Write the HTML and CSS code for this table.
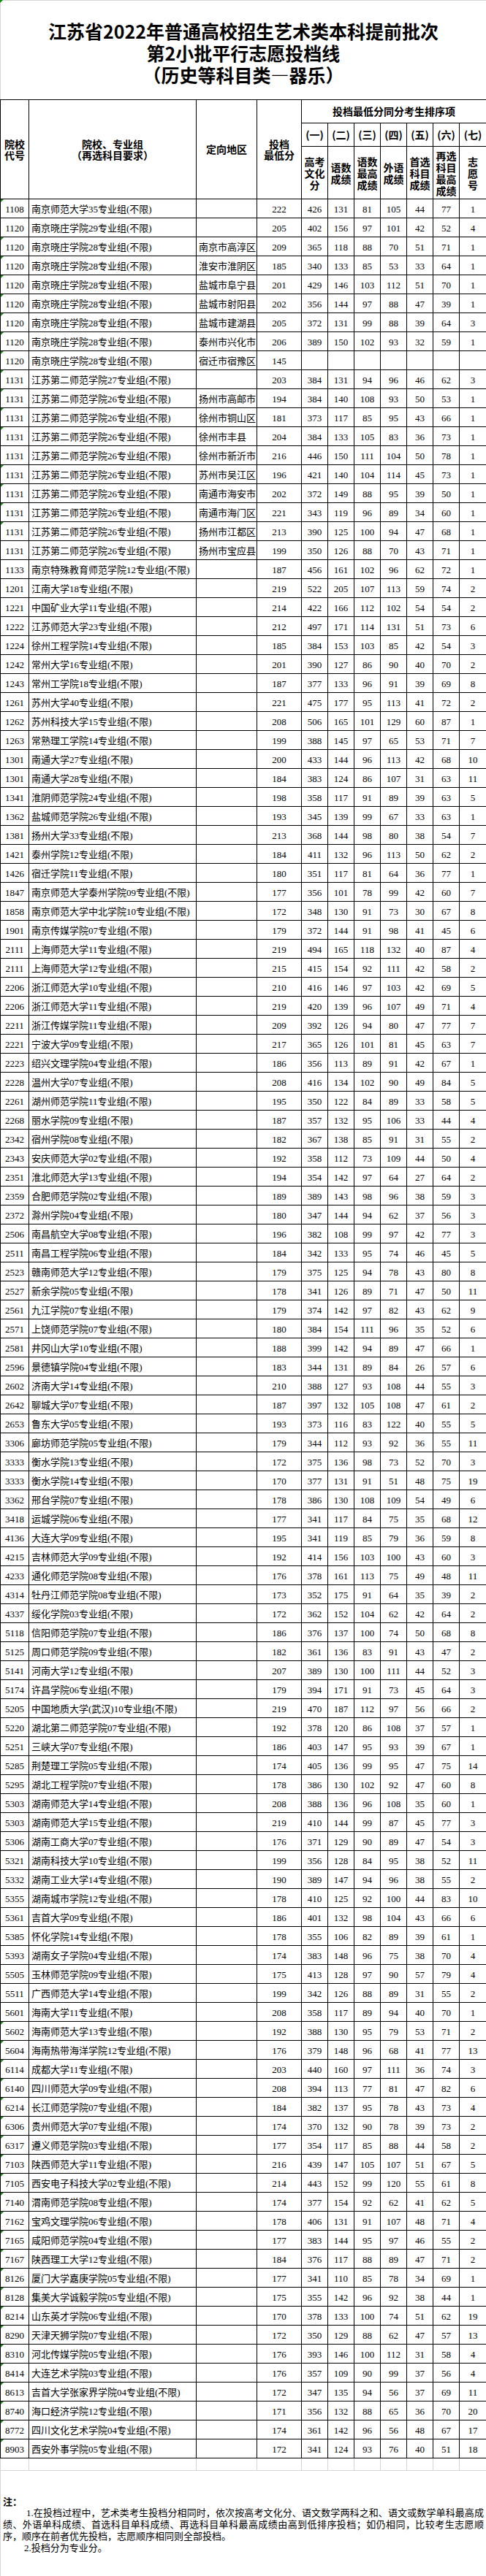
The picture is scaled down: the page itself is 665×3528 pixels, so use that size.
FILE: index.html
```
<!DOCTYPE html>
<html lang="zh-CN">
<head>
<meta charset="utf-8">
<title>江苏省2022年普通高校招生艺术类本科提前批次第2小批平行志愿投档线</title>
<link rel="stylesheet" href="styles.css">
</head>
<body>
<div class="sheet">
  <div class="title">
    <div>江苏省2022年普通高校招生艺术类本科提前批次</div>
    <div>第2小批平行志愿投档线</div>
    <div>（历史等科目类—器乐）</div>
  </div>
  <table class="grid">
    <colgroup>
      <col class="c-code"><col class="c-name"><col class="c-area"><col class="c-score">
      <col class="c-n"><col class="c-n"><col class="c-n"><col class="c-n"><col class="c-n"><col class="c-n"><col class="c-last">
    </colgroup>
    <thead>
      <tr class="hd1">
        <th rowspan="3" class="h2l">院校<br>代号</th>
        <th rowspan="3" class="h2l">院校、专业组<br>（再选科目要求）</th>
        <th rowspan="3">定向地区</th>
        <th rowspan="3" class="h2l">投档<br>最低分</th>
        <th colspan="7">投档最低分同分考生排序项</th>
      </tr>
      <tr class="hd2">
        <th>(一)</th><th>(二)</th><th>(三)</th><th>(四)</th><th>(五)</th><th>(六)</th><th>(七)</th>
      </tr>
      <tr class="hd3">
        <th class="sub">高考<br>文化<br>分</th>
        <th class="sub">语数<br>成绩</th>
        <th class="sub">语数<br>最高<br>成绩</th>
        <th class="sub">外语<br>成绩</th>
        <th class="sub">首选<br>科目<br>成绩</th>
        <th class="sub">再选<br>科目<br>最高<br>成绩</th>
        <th class="sub">志<br>愿<br>号</th>
      </tr>
    </thead>
    <tbody>
<tr class="m"><td>1108</td><td class="n">南京师范大学35专业组(不限)</td><td class="a"></td><td>222</td><td>426</td><td>131</td><td>81</td><td>105</td><td>44</td><td>77</td><td>1</td></tr>
<tr><td>1120</td><td class="n">南京晓庄学院29专业组(不限)</td><td class="a"></td><td>205</td><td>402</td><td>156</td><td>97</td><td>101</td><td>42</td><td>52</td><td>4</td></tr>
<tr class="m"><td>1120</td><td class="n">南京晓庄学院28专业组(不限)</td><td class="a">南京市高淳区</td><td>209</td><td>365</td><td>118</td><td>88</td><td>70</td><td>51</td><td>71</td><td>1</td></tr>
<tr class="m"><td>1120</td><td class="n">南京晓庄学院28专业组(不限)</td><td class="a">淮安市淮阴区</td><td>185</td><td>340</td><td>133</td><td>85</td><td>53</td><td>33</td><td>64</td><td>1</td></tr>
<tr class="m"><td>1120</td><td class="n">南京晓庄学院28专业组(不限)</td><td class="a">盐城市阜宁县</td><td>201</td><td>429</td><td>146</td><td>103</td><td>112</td><td>51</td><td>70</td><td>1</td></tr>
<tr class="m"><td>1120</td><td class="n">南京晓庄学院28专业组(不限)</td><td class="a">盐城市射阳县</td><td>202</td><td>356</td><td>144</td><td>97</td><td>88</td><td>47</td><td>39</td><td>1</td></tr>
<tr class="m"><td>1120</td><td class="n">南京晓庄学院28专业组(不限)</td><td class="a">盐城市建湖县</td><td>205</td><td>372</td><td>131</td><td>99</td><td>88</td><td>39</td><td>64</td><td>3</td></tr>
<tr class="m"><td>1120</td><td class="n">南京晓庄学院28专业组(不限)</td><td class="a">泰州市兴化市</td><td>206</td><td>389</td><td>150</td><td>102</td><td>93</td><td>32</td><td>59</td><td>1</td></tr>
<tr class="m"><td>1120</td><td class="n">南京晓庄学院28专业组(不限)</td><td class="a">宿迁市宿豫区</td><td>145</td><td></td><td></td><td></td><td></td><td></td><td></td><td></td></tr>
<tr class="m"><td>1131</td><td class="n">江苏第二师范学院27专业组(不限)</td><td class="a"></td><td>203</td><td>384</td><td>131</td><td>94</td><td>96</td><td>46</td><td>62</td><td>3</td></tr>
<tr class="m"><td>1131</td><td class="n">江苏第二师范学院26专业组(不限)</td><td class="a">扬州市高邮市</td><td>194</td><td>384</td><td>140</td><td>108</td><td>93</td><td>50</td><td>53</td><td>1</td></tr>
<tr class="m"><td>1131</td><td class="n">江苏第二师范学院26专业组(不限)</td><td class="a">徐州市铜山区</td><td>181</td><td>373</td><td>117</td><td>85</td><td>95</td><td>43</td><td>66</td><td>1</td></tr>
<tr class="m"><td>1131</td><td class="n">江苏第二师范学院26专业组(不限)</td><td class="a">徐州市丰县</td><td>204</td><td>384</td><td>133</td><td>105</td><td>83</td><td>36</td><td>73</td><td>1</td></tr>
<tr><td>1131</td><td class="n">江苏第二师范学院26专业组(不限)</td><td class="a">徐州市新沂市</td><td>216</td><td>446</td><td>150</td><td>111</td><td>104</td><td>50</td><td>78</td><td>1</td></tr>
<tr class="m"><td>1131</td><td class="n">江苏第二师范学院26专业组(不限)</td><td class="a">苏州市吴江区</td><td>196</td><td>421</td><td>140</td><td>104</td><td>114</td><td>45</td><td>73</td><td>1</td></tr>
<tr class="m"><td>1131</td><td class="n">江苏第二师范学院26专业组(不限)</td><td class="a">南通市海安市</td><td>202</td><td>372</td><td>149</td><td>88</td><td>95</td><td>39</td><td>50</td><td>1</td></tr>
<tr class="m"><td>1131</td><td class="n">江苏第二师范学院26专业组(不限)</td><td class="a">南通市海门区</td><td>221</td><td>343</td><td>119</td><td>96</td><td>89</td><td>34</td><td>60</td><td>1</td></tr>
<tr class="m"><td>1131</td><td class="n">江苏第二师范学院26专业组(不限)</td><td class="a">扬州市江都区</td><td>213</td><td>390</td><td>125</td><td>100</td><td>94</td><td>47</td><td>68</td><td>1</td></tr>
<tr><td>1131</td><td class="n">江苏第二师范学院26专业组(不限)</td><td class="a">扬州市宝应县</td><td>199</td><td>350</td><td>126</td><td>88</td><td>70</td><td>43</td><td>71</td><td>1</td></tr>
<tr><td>1133</td><td class="n">南京特殊教育师范学院12专业组(不限)</td><td class="a"></td><td>187</td><td>456</td><td>161</td><td>102</td><td>96</td><td>62</td><td>72</td><td>1</td></tr>
<tr><td>1201</td><td class="n">江南大学18专业组(不限)</td><td class="a"></td><td>219</td><td>522</td><td>205</td><td>107</td><td>113</td><td>59</td><td>74</td><td>2</td></tr>
<tr><td>1221</td><td class="n">中国矿业大学11专业组(不限)</td><td class="a"></td><td>214</td><td>422</td><td>166</td><td>112</td><td>102</td><td>54</td><td>54</td><td>2</td></tr>
<tr><td>1222</td><td class="n">江苏师范大学23专业组(不限)</td><td class="a"></td><td>212</td><td>497</td><td>171</td><td>114</td><td>131</td><td>51</td><td>73</td><td>6</td></tr>
<tr><td>1224</td><td class="n">徐州工程学院14专业组(不限)</td><td class="a"></td><td>185</td><td>384</td><td>153</td><td>103</td><td>85</td><td>42</td><td>54</td><td>3</td></tr>
<tr><td>1242</td><td class="n">常州大学16专业组(不限)</td><td class="a"></td><td>201</td><td>390</td><td>127</td><td>86</td><td>90</td><td>40</td><td>70</td><td>2</td></tr>
<tr><td>1243</td><td class="n">常州工学院18专业组(不限)</td><td class="a"></td><td>187</td><td>377</td><td>133</td><td>96</td><td>91</td><td>39</td><td>69</td><td>8</td></tr>
<tr><td>1261</td><td class="n">苏州大学40专业组(不限)</td><td class="a"></td><td>221</td><td>475</td><td>177</td><td>95</td><td>113</td><td>41</td><td>72</td><td>2</td></tr>
<tr><td>1262</td><td class="n">苏州科技大学15专业组(不限)</td><td class="a"></td><td>208</td><td>506</td><td>165</td><td>101</td><td>129</td><td>60</td><td>87</td><td>1</td></tr>
<tr><td>1263</td><td class="n">常熟理工学院14专业组(不限)</td><td class="a"></td><td>199</td><td>388</td><td>145</td><td>97</td><td>65</td><td>53</td><td>71</td><td>7</td></tr>
<tr><td>1301</td><td class="n">南通大学27专业组(不限)</td><td class="a"></td><td>200</td><td>433</td><td>144</td><td>96</td><td>113</td><td>42</td><td>68</td><td>10</td></tr>
<tr><td>1301</td><td class="n">南通大学28专业组(不限)</td><td class="a"></td><td>184</td><td>383</td><td>124</td><td>86</td><td>107</td><td>31</td><td>63</td><td>11</td></tr>
<tr><td>1341</td><td class="n">淮阴师范学院24专业组(不限)</td><td class="a"></td><td>198</td><td>358</td><td>117</td><td>91</td><td>89</td><td>39</td><td>63</td><td>5</td></tr>
<tr><td>1362</td><td class="n">盐城师范学院26专业组(不限)</td><td class="a"></td><td>193</td><td>345</td><td>139</td><td>99</td><td>67</td><td>33</td><td>63</td><td>1</td></tr>
<tr><td>1381</td><td class="n">扬州大学33专业组(不限)</td><td class="a"></td><td>213</td><td>368</td><td>144</td><td>98</td><td>80</td><td>38</td><td>54</td><td>7</td></tr>
<tr><td>1421</td><td class="n">泰州学院12专业组(不限)</td><td class="a"></td><td>184</td><td>411</td><td>132</td><td>96</td><td>113</td><td>50</td><td>62</td><td>2</td></tr>
<tr><td>1426</td><td class="n">宿迁学院11专业组(不限)</td><td class="a"></td><td>180</td><td>351</td><td>117</td><td>81</td><td>64</td><td>36</td><td>77</td><td>1</td></tr>
<tr><td>1847</td><td class="n">南京师范大学泰州学院09专业组(不限)</td><td class="a"></td><td>177</td><td>356</td><td>101</td><td>78</td><td>99</td><td>42</td><td>60</td><td>7</td></tr>
<tr><td>1858</td><td class="n">南京师范大学中北学院10专业组(不限)</td><td class="a"></td><td>172</td><td>348</td><td>130</td><td>91</td><td>73</td><td>30</td><td>67</td><td>8</td></tr>
<tr><td>1901</td><td class="n">南京传媒学院07专业组(不限)</td><td class="a"></td><td>179</td><td>372</td><td>144</td><td>91</td><td>98</td><td>41</td><td>45</td><td>6</td></tr>
<tr><td>2111</td><td class="n">上海师范大学11专业组(不限)</td><td class="a"></td><td>219</td><td>494</td><td>165</td><td>118</td><td>132</td><td>40</td><td>87</td><td>4</td></tr>
<tr><td>2111</td><td class="n">上海师范大学12专业组(不限)</td><td class="a"></td><td>215</td><td>415</td><td>154</td><td>92</td><td>111</td><td>42</td><td>58</td><td>2</td></tr>
<tr><td>2206</td><td class="n">浙江师范大学10专业组(不限)</td><td class="a"></td><td>210</td><td>416</td><td>146</td><td>97</td><td>103</td><td>42</td><td>69</td><td>5</td></tr>
<tr><td>2206</td><td class="n">浙江师范大学11专业组(不限)</td><td class="a"></td><td>219</td><td>420</td><td>139</td><td>96</td><td>107</td><td>49</td><td>71</td><td>4</td></tr>
<tr><td>2211</td><td class="n">浙江传媒学院11专业组(不限)</td><td class="a"></td><td>209</td><td>392</td><td>126</td><td>94</td><td>80</td><td>47</td><td>77</td><td>7</td></tr>
<tr><td>2221</td><td class="n">宁波大学09专业组(不限)</td><td class="a"></td><td>217</td><td>365</td><td>126</td><td>101</td><td>81</td><td>45</td><td>63</td><td>7</td></tr>
<tr><td>2223</td><td class="n">绍兴文理学院04专业组(不限)</td><td class="a"></td><td>186</td><td>356</td><td>113</td><td>89</td><td>91</td><td>42</td><td>67</td><td>1</td></tr>
<tr><td>2228</td><td class="n">温州大学07专业组(不限)</td><td class="a"></td><td>208</td><td>416</td><td>134</td><td>102</td><td>90</td><td>49</td><td>84</td><td>5</td></tr>
<tr><td>2261</td><td class="n">湖州师范学院11专业组(不限)</td><td class="a"></td><td>195</td><td>350</td><td>122</td><td>84</td><td>89</td><td>33</td><td>58</td><td>5</td></tr>
<tr><td>2268</td><td class="n">丽水学院09专业组(不限)</td><td class="a"></td><td>187</td><td>357</td><td>132</td><td>95</td><td>106</td><td>33</td><td>44</td><td>4</td></tr>
<tr><td>2342</td><td class="n">宿州学院08专业组(不限)</td><td class="a"></td><td>182</td><td>367</td><td>138</td><td>85</td><td>91</td><td>31</td><td>55</td><td>2</td></tr>
<tr><td>2343</td><td class="n">安庆师范大学02专业组(不限)</td><td class="a"></td><td>192</td><td>358</td><td>112</td><td>73</td><td>109</td><td>44</td><td>50</td><td>4</td></tr>
<tr><td>2351</td><td class="n">淮北师范大学13专业组(不限)</td><td class="a"></td><td>194</td><td>354</td><td>142</td><td>97</td><td>64</td><td>27</td><td>64</td><td>2</td></tr>
<tr><td>2359</td><td class="n">合肥师范学院02专业组(不限)</td><td class="a"></td><td>189</td><td>389</td><td>143</td><td>98</td><td>96</td><td>38</td><td>59</td><td>3</td></tr>
<tr><td>2372</td><td class="n">滁州学院04专业组(不限)</td><td class="a"></td><td>180</td><td>347</td><td>144</td><td>94</td><td>62</td><td>37</td><td>56</td><td>3</td></tr>
<tr><td>2506</td><td class="n">南昌航空大学08专业组(不限)</td><td class="a"></td><td>196</td><td>382</td><td>108</td><td>99</td><td>97</td><td>42</td><td>77</td><td>3</td></tr>
<tr><td>2511</td><td class="n">南昌工程学院06专业组(不限)</td><td class="a"></td><td>184</td><td>342</td><td>133</td><td>95</td><td>74</td><td>46</td><td>45</td><td>5</td></tr>
<tr><td>2523</td><td class="n">赣南师范大学12专业组(不限)</td><td class="a"></td><td>179</td><td>375</td><td>125</td><td>94</td><td>78</td><td>43</td><td>80</td><td>8</td></tr>
<tr><td>2527</td><td class="n">新余学院05专业组(不限)</td><td class="a"></td><td>178</td><td>341</td><td>126</td><td>89</td><td>71</td><td>47</td><td>50</td><td>11</td></tr>
<tr><td>2561</td><td class="n">九江学院07专业组(不限)</td><td class="a"></td><td>179</td><td>374</td><td>142</td><td>97</td><td>82</td><td>43</td><td>62</td><td>9</td></tr>
<tr><td>2571</td><td class="n">上饶师范学院07专业组(不限)</td><td class="a"></td><td>180</td><td>384</td><td>154</td><td>111</td><td>96</td><td>35</td><td>52</td><td>6</td></tr>
<tr><td>2581</td><td class="n">井冈山大学10专业组(不限)</td><td class="a"></td><td>188</td><td>399</td><td>142</td><td>94</td><td>89</td><td>47</td><td>66</td><td>1</td></tr>
<tr><td>2596</td><td class="n">景德镇学院04专业组(不限)</td><td class="a"></td><td>183</td><td>344</td><td>131</td><td>89</td><td>84</td><td>26</td><td>57</td><td>6</td></tr>
<tr><td>2602</td><td class="n">济南大学14专业组(不限)</td><td class="a"></td><td>210</td><td>388</td><td>127</td><td>93</td><td>108</td><td>44</td><td>55</td><td>3</td></tr>
<tr><td>2642</td><td class="n">聊城大学07专业组(不限)</td><td class="a"></td><td>187</td><td>397</td><td>132</td><td>105</td><td>108</td><td>47</td><td>61</td><td>2</td></tr>
<tr><td>2653</td><td class="n">鲁东大学05专业组(不限)</td><td class="a"></td><td>193</td><td>373</td><td>116</td><td>83</td><td>122</td><td>40</td><td>55</td><td>5</td></tr>
<tr><td>3306</td><td class="n">廊坊师范学院05专业组(不限)</td><td class="a"></td><td>179</td><td>344</td><td>112</td><td>93</td><td>92</td><td>36</td><td>55</td><td>11</td></tr>
<tr><td>3333</td><td class="n">衡水学院13专业组(不限)</td><td class="a"></td><td>172</td><td>375</td><td>136</td><td>98</td><td>73</td><td>52</td><td>70</td><td>3</td></tr>
<tr><td>3333</td><td class="n">衡水学院14专业组(不限)</td><td class="a"></td><td>170</td><td>377</td><td>131</td><td>91</td><td>51</td><td>48</td><td>75</td><td>19</td></tr>
<tr><td>3362</td><td class="n">邢台学院07专业组(不限)</td><td class="a"></td><td>178</td><td>386</td><td>130</td><td>108</td><td>109</td><td>54</td><td>49</td><td>6</td></tr>
<tr><td>3418</td><td class="n">运城学院06专业组(不限)</td><td class="a"></td><td>177</td><td>341</td><td>117</td><td>84</td><td>75</td><td>35</td><td>68</td><td>12</td></tr>
<tr><td>4136</td><td class="n">大连大学09专业组(不限)</td><td class="a"></td><td>195</td><td>341</td><td>119</td><td>85</td><td>79</td><td>36</td><td>59</td><td>8</td></tr>
<tr><td>4215</td><td class="n">吉林师范大学09专业组(不限)</td><td class="a"></td><td>192</td><td>414</td><td>156</td><td>103</td><td>100</td><td>43</td><td>60</td><td>3</td></tr>
<tr><td>4233</td><td class="n">通化师范学院08专业组(不限)</td><td class="a"></td><td>176</td><td>378</td><td>161</td><td>113</td><td>75</td><td>49</td><td>48</td><td>11</td></tr>
<tr><td>4314</td><td class="n">牡丹江师范学院08专业组(不限)</td><td class="a"></td><td>173</td><td>352</td><td>175</td><td>91</td><td>64</td><td>35</td><td>39</td><td>2</td></tr>
<tr><td>4337</td><td class="n">绥化学院03专业组(不限)</td><td class="a"></td><td>172</td><td>362</td><td>152</td><td>104</td><td>62</td><td>42</td><td>64</td><td>2</td></tr>
<tr><td>5118</td><td class="n">信阳师范学院07专业组(不限)</td><td class="a"></td><td>186</td><td>376</td><td>137</td><td>100</td><td>74</td><td>50</td><td>68</td><td>8</td></tr>
<tr><td>5125</td><td class="n">周口师范学院09专业组(不限)</td><td class="a"></td><td>182</td><td>361</td><td>136</td><td>83</td><td>91</td><td>43</td><td>47</td><td>2</td></tr>
<tr><td>5141</td><td class="n">河南大学12专业组(不限)</td><td class="a"></td><td>207</td><td>389</td><td>130</td><td>100</td><td>111</td><td>44</td><td>52</td><td>3</td></tr>
<tr><td>5174</td><td class="n">许昌学院06专业组(不限)</td><td class="a"></td><td>179</td><td>394</td><td>171</td><td>91</td><td>73</td><td>45</td><td>64</td><td>3</td></tr>
<tr><td>5205</td><td class="n">中国地质大学(武汉)10专业组(不限)</td><td class="a"></td><td>219</td><td>470</td><td>187</td><td>112</td><td>97</td><td>56</td><td>66</td><td>2</td></tr>
<tr><td>5220</td><td class="n">湖北第二师范学院07专业组(不限)</td><td class="a"></td><td>192</td><td>378</td><td>120</td><td>86</td><td>108</td><td>37</td><td>57</td><td>1</td></tr>
<tr><td>5251</td><td class="n">三峡大学07专业组(不限)</td><td class="a"></td><td>186</td><td>403</td><td>147</td><td>95</td><td>93</td><td>39</td><td>67</td><td>1</td></tr>
<tr><td>5285</td><td class="n">荆楚理工学院05专业组(不限)</td><td class="a"></td><td>174</td><td>405</td><td>136</td><td>99</td><td>95</td><td>47</td><td>75</td><td>14</td></tr>
<tr><td>5295</td><td class="n">湖北工程学院07专业组(不限)</td><td class="a"></td><td>178</td><td>386</td><td>130</td><td>102</td><td>92</td><td>47</td><td>60</td><td>8</td></tr>
<tr><td>5303</td><td class="n">湖南师范大学14专业组(不限)</td><td class="a"></td><td>208</td><td>388</td><td>136</td><td>96</td><td>108</td><td>35</td><td>60</td><td>1</td></tr>
<tr><td>5303</td><td class="n">湖南师范大学15专业组(不限)</td><td class="a"></td><td>219</td><td>410</td><td>144</td><td>99</td><td>87</td><td>45</td><td>77</td><td>3</td></tr>
<tr><td>5306</td><td class="n">湖南工商大学07专业组(不限)</td><td class="a"></td><td>176</td><td>371</td><td>129</td><td>90</td><td>89</td><td>47</td><td>54</td><td>3</td></tr>
<tr><td>5321</td><td class="n">湖南科技大学10专业组(不限)</td><td class="a"></td><td>199</td><td>356</td><td>128</td><td>84</td><td>95</td><td>38</td><td>52</td><td>11</td></tr>
<tr><td>5332</td><td class="n">湖南工业大学14专业组(不限)</td><td class="a"></td><td>190</td><td>389</td><td>147</td><td>94</td><td>96</td><td>38</td><td>55</td><td>2</td></tr>
<tr><td>5355</td><td class="n">湖南城市学院12专业组(不限)</td><td class="a"></td><td>178</td><td>410</td><td>125</td><td>92</td><td>100</td><td>44</td><td>83</td><td>10</td></tr>
<tr><td>5361</td><td class="n">吉首大学09专业组(不限)</td><td class="a"></td><td>186</td><td>401</td><td>132</td><td>98</td><td>104</td><td>43</td><td>66</td><td>6</td></tr>
<tr><td>5385</td><td class="n">怀化学院14专业组(不限)</td><td class="a"></td><td>178</td><td>355</td><td>106</td><td>82</td><td>89</td><td>39</td><td>61</td><td>1</td></tr>
<tr><td>5393</td><td class="n">湖南女子学院04专业组(不限)</td><td class="a"></td><td>174</td><td>383</td><td>148</td><td>96</td><td>75</td><td>38</td><td>70</td><td>4</td></tr>
<tr><td>5505</td><td class="n">玉林师范学院09专业组(不限)</td><td class="a"></td><td>175</td><td>413</td><td>128</td><td>97</td><td>90</td><td>57</td><td>79</td><td>4</td></tr>
<tr><td>5511</td><td class="n">广西师范大学14专业组(不限)</td><td class="a"></td><td>199</td><td>342</td><td>126</td><td>88</td><td>89</td><td>31</td><td>55</td><td>2</td></tr>
<tr><td>5601</td><td class="n">海南大学11专业组(不限)</td><td class="a"></td><td>208</td><td>358</td><td>117</td><td>89</td><td>94</td><td>40</td><td>70</td><td>1</td></tr>
<tr class="m"><td>5602</td><td class="n">海南师范大学13专业组(不限)</td><td class="a"></td><td>192</td><td>388</td><td>130</td><td>95</td><td>79</td><td>53</td><td>71</td><td>2</td></tr>
<tr class="m"><td>5604</td><td class="n">海南热带海洋学院12专业组(不限)</td><td class="a"></td><td>176</td><td>379</td><td>148</td><td>96</td><td>68</td><td>41</td><td>77</td><td>13</td></tr>
<tr class="m"><td>6114</td><td class="n">成都大学11专业组(不限)</td><td class="a"></td><td>203</td><td>440</td><td>160</td><td>97</td><td>111</td><td>36</td><td>74</td><td>3</td></tr>
<tr class="m"><td>6140</td><td class="n">四川师范大学09专业组(不限)</td><td class="a"></td><td>208</td><td>394</td><td>113</td><td>77</td><td>81</td><td>47</td><td>82</td><td>6</td></tr>
<tr class="m"><td>6214</td><td class="n">长江师范学院07专业组(不限)</td><td class="a"></td><td>184</td><td>382</td><td>137</td><td>95</td><td>78</td><td>43</td><td>73</td><td>4</td></tr>
<tr class="m"><td>6306</td><td class="n">贵州师范大学07专业组(不限)</td><td class="a"></td><td>174</td><td>370</td><td>132</td><td>90</td><td>78</td><td>39</td><td>73</td><td>2</td></tr>
<tr class="m"><td>6317</td><td class="n">遵义师范学院03专业组(不限)</td><td class="a"></td><td>177</td><td>354</td><td>117</td><td>85</td><td>88</td><td>44</td><td>58</td><td>2</td></tr>
<tr class="m"><td>7103</td><td class="n">陕西师范大学11专业组(不限)</td><td class="a"></td><td>216</td><td>439</td><td>147</td><td>105</td><td>107</td><td>51</td><td>67</td><td>5</td></tr>
<tr class="m"><td>7105</td><td class="n">西安电子科技大学02专业组(不限)</td><td class="a"></td><td>214</td><td>443</td><td>152</td><td>99</td><td>120</td><td>55</td><td>61</td><td>8</td></tr>
<tr class="m"><td>7140</td><td class="n">渭南师范学院08专业组(不限)</td><td class="a"></td><td>174</td><td>377</td><td>154</td><td>92</td><td>62</td><td>41</td><td>62</td><td>5</td></tr>
<tr class="m"><td>7162</td><td class="n">宝鸡文理学院06专业组(不限)</td><td class="a"></td><td>178</td><td>406</td><td>131</td><td>91</td><td>107</td><td>48</td><td>71</td><td>4</td></tr>
<tr class="m"><td>7165</td><td class="n">咸阳师范学院04专业组(不限)</td><td class="a"></td><td>177</td><td>383</td><td>144</td><td>95</td><td>97</td><td>46</td><td>55</td><td>2</td></tr>
<tr class="m"><td>7167</td><td class="n">陕西理工大学12专业组(不限)</td><td class="a"></td><td>184</td><td>376</td><td>117</td><td>88</td><td>89</td><td>47</td><td>71</td><td>2</td></tr>
<tr class="m"><td>8126</td><td class="n">厦门大学嘉庚学院05专业组(不限)</td><td class="a"></td><td>177</td><td>341</td><td>110</td><td>85</td><td>78</td><td>34</td><td>69</td><td>1</td></tr>
<tr class="m"><td>8128</td><td class="n">集美大学诚毅学院05专业组(不限)</td><td class="a"></td><td>175</td><td>355</td><td>142</td><td>96</td><td>92</td><td>38</td><td>44</td><td>1</td></tr>
<tr class="m"><td>8214</td><td class="n">山东英才学院06专业组(不限)</td><td class="a"></td><td>170</td><td>378</td><td>133</td><td>100</td><td>74</td><td>51</td><td>62</td><td>19</td></tr>
<tr class="m"><td>8290</td><td class="n">天津天狮学院07专业组(不限)</td><td class="a"></td><td>172</td><td>350</td><td>129</td><td>88</td><td>62</td><td>47</td><td>57</td><td>13</td></tr>
<tr class="m"><td>8310</td><td class="n">河北传媒学院05专业组(不限)</td><td class="a"></td><td>176</td><td>393</td><td>146</td><td>100</td><td>112</td><td>31</td><td>58</td><td>4</td></tr>
<tr class="m"><td>8414</td><td class="n">大连艺术学院03专业组(不限)</td><td class="a"></td><td>176</td><td>357</td><td>109</td><td>90</td><td>99</td><td>37</td><td>56</td><td>4</td></tr>
<tr class="m"><td>8613</td><td class="n">吉首大学张家界学院04专业组(不限)</td><td class="a"></td><td>172</td><td>347</td><td>135</td><td>94</td><td>56</td><td>37</td><td>69</td><td>11</td></tr>
<tr class="m"><td>8740</td><td class="n">海口经济学院12专业组(不限)</td><td class="a"></td><td>171</td><td>356</td><td>132</td><td>88</td><td>65</td><td>36</td><td>70</td><td>20</td></tr>
<tr class="m"><td>8772</td><td class="n">四川文化艺术学院04专业组(不限)</td><td class="a"></td><td>174</td><td>361</td><td>142</td><td>96</td><td>56</td><td>48</td><td>67</td><td>17</td></tr>
<tr class="m"><td>8903</td><td class="n">西安外事学院05专业组(不限)</td><td class="a"></td><td>172</td><td>341</td><td>124</td><td>93</td><td>76</td><td>40</td><td>51</td><td>18</td></tr>
<tr class="blank"><td></td><td></td><td></td><td></td><td></td><td></td><td></td><td></td><td></td><td></td><td></td></tr>
    </tbody>
  </table>
  <div class="notes">
    <p class="note-head">注：</p>
    <p class="note-line just indent1">1.在投档过程中，艺术类考生投档分相同时，依次按高考文化分、语文数学两科之和、语文或数学单科最高成</p>
    <p class="note-line just">绩、外语单科成绩、首选科目单科成绩、再选科目单科最高成绩由高到低排序投档；如仍相同，比较考生志愿顺</p>
    <p class="note-line">序，顺序在前者优先投档，志愿顺序相同则全部投档。</p>
    <p class="note-line indent2">2.投档分为专业分。</p>
  </div>
</div>
</body>
</html>
```
FILE: styles.css
```
* {
  box-sizing: border-box;
}

html,
body {
  margin: 0;
  padding: 0;
  background: #ffffff;
}

body {
  width: 665px;
  color: #000000;
  font-family: "Liberation Serif", "Noto Sans CJK SC", serif;
}

.sheet {
  width: 665px;
}

/* ---------- title ---------- */
.title {
  position: relative;
  height: 136px;
  padding-top: 26px;
  border-top: 1px solid #d6d6d6;
  border-left: 1px solid #d6d6d6;
  text-align: center;
  font-family: "Noto Sans CJK SC", sans-serif;
  font-weight: 700;
  font-size: 25px;
  line-height: 30px;
  letter-spacing: 0;
}

.title::before {
  content: "";
  position: absolute;
  left: -1px;
  top: -1px;
  border-top: 4px solid #118a11;
  border-right: 4px solid transparent;
}

/* ---------- table ---------- */
.grid {
  width: 665px;
  border-collapse: collapse;
  table-layout: fixed;
}

.c-code { width: 39px; }
.c-name { width: 229px; }
.c-area { width: 83px; }
.c-score { width: 61px; }
.c-n { width: 36px; }
.c-last { width: 37px; }

.grid th,
.grid td {
  border: 1px solid #000000;
  padding: 0;
  text-align: center;
  vertical-align: middle;
  white-space: nowrap;
  overflow: hidden;
}

.grid th {
  font-family: "Noto Sans CJK SC", sans-serif;
  font-weight: 700;
  font-size: 14px;
  line-height: 15px;
}

.grid th.sub {
  line-height: 16px;
}

.hd1 { height: 32px; }
.hd2 { height: 32px; }
.hd3 { height: 72px; }

.grid tbody tr {
  height: 26px;
}

.grid td {
  position: relative;
  font-size: 13px;
  line-height: 14px;
  padding-top: 2px;
}

.grid td.n,
.grid td.a {
  text-align: left;
  padding-left: 3px;
}

.grid tr.m td:first-child::before {
  content: "";
  position: absolute;
  left: 0;
  top: 0;
  border-top: 4px solid #118a11;
  border-right: 4px solid transparent;
}

.grid tr.blank {
  height: 17px;
}

.grid tr.blank td {
  border-color: #d4d4d4;
  border-top-color: #000000;
}

/* ---------- notes ---------- */
.notes {
  height: 145px;
  padding: 34px 3px 0 3px;
  border-left: 1px solid #d6d6d6;
  border-bottom: 1px solid #d6d6d6;
  font-family: "Liberation Serif", "Noto Sans CJK SC", serif;
  font-size: 13px;
  line-height: 16px;
}

.notes p {
  margin: 0;
  white-space: nowrap;
}

.note-head {
  font-family: "Noto Sans CJK SC", sans-serif;
  font-weight: 700;
}

.note-line.just {
  white-space: normal;
  text-align: justify;
  text-align-last: justify;
}

.indent1 {
  padding-left: 32px;
}

.indent2 {
  padding-left: 29px;
}
```
